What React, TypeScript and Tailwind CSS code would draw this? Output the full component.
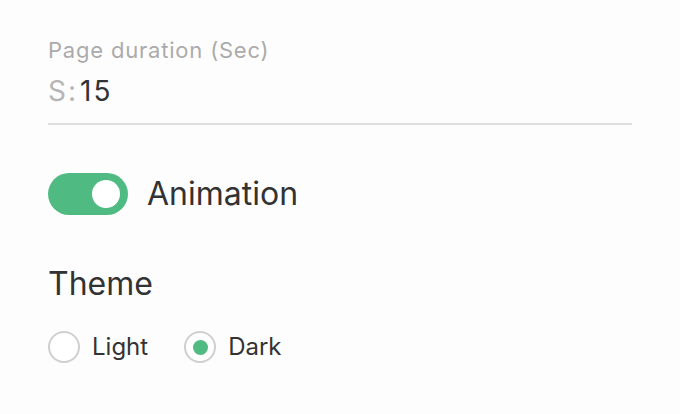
import { useState } from "react";

export default function App() {
  const [animation, setAnimation] = useState(true);
  const [theme, setTheme] = useState("dark");

  return (
    <div className="w-[680px] h-[414px] bg-[#fefdfe] px-12 pt-[36px] text-[#333] font-['Inter',sans-serif]">
      {/* Page duration */}
      <div className="w-[584px] border-b-2 border-[#dedede] pb-[14px]">
        <div className="text-[22px] leading-[28px] tracking-[0.8px] text-[#ababab]">Page duration (Sec)</div>
        <div className="text-[28px] leading-[36px] mt-[9px] tracking-[2px] flex items-baseline">
          <span className="text-[#b5b5b5] mr-[2px]">S:</span>
          <span className="text-[#333]">15</span>
        </div>
      </div>

      {/* Animation */}
      <div className="flex items-center gap-[19px] mt-[48px]">
        <button
          onClick={() => setAnimation(!animation)}
          className={
            "w-[80px] h-[42px] rounded-full flex items-center px-[8px] " +
            (animation ? "bg-[#4fbb82] justify-end" : "bg-[#ccc] justify-start")
          }
        >
          <span className="w-[28px] h-[28px] rounded-full bg-white" />
        </button>
        <span className="text-[32px] leading-[42px]">Animation</span>
      </div>

      {/* Theme */}
      <div className="text-[32px] leading-[40px] mt-[49px]">Theme</div>
      <div className="flex items-center gap-[36px] mt-[27px]">
        {[
          ["light", "Light"],
          ["dark", "Dark"],
        ].map(([value, label]) => (
          <button key={value} onClick={() => setTheme(value)} className="flex items-center gap-[12px]">
            <span className="w-[32px] h-[32px] rounded-full border-2 border-[#cfcfcf] bg-white flex items-center justify-center">
              {theme === value && <span className="w-[15px] h-[15px] rounded-full bg-[#4fbb82]" />}
            </span>
            <span className="text-[24px] leading-[32px]">{label}</span>
          </button>
        ))}
      </div>
    </div>
  );
}
